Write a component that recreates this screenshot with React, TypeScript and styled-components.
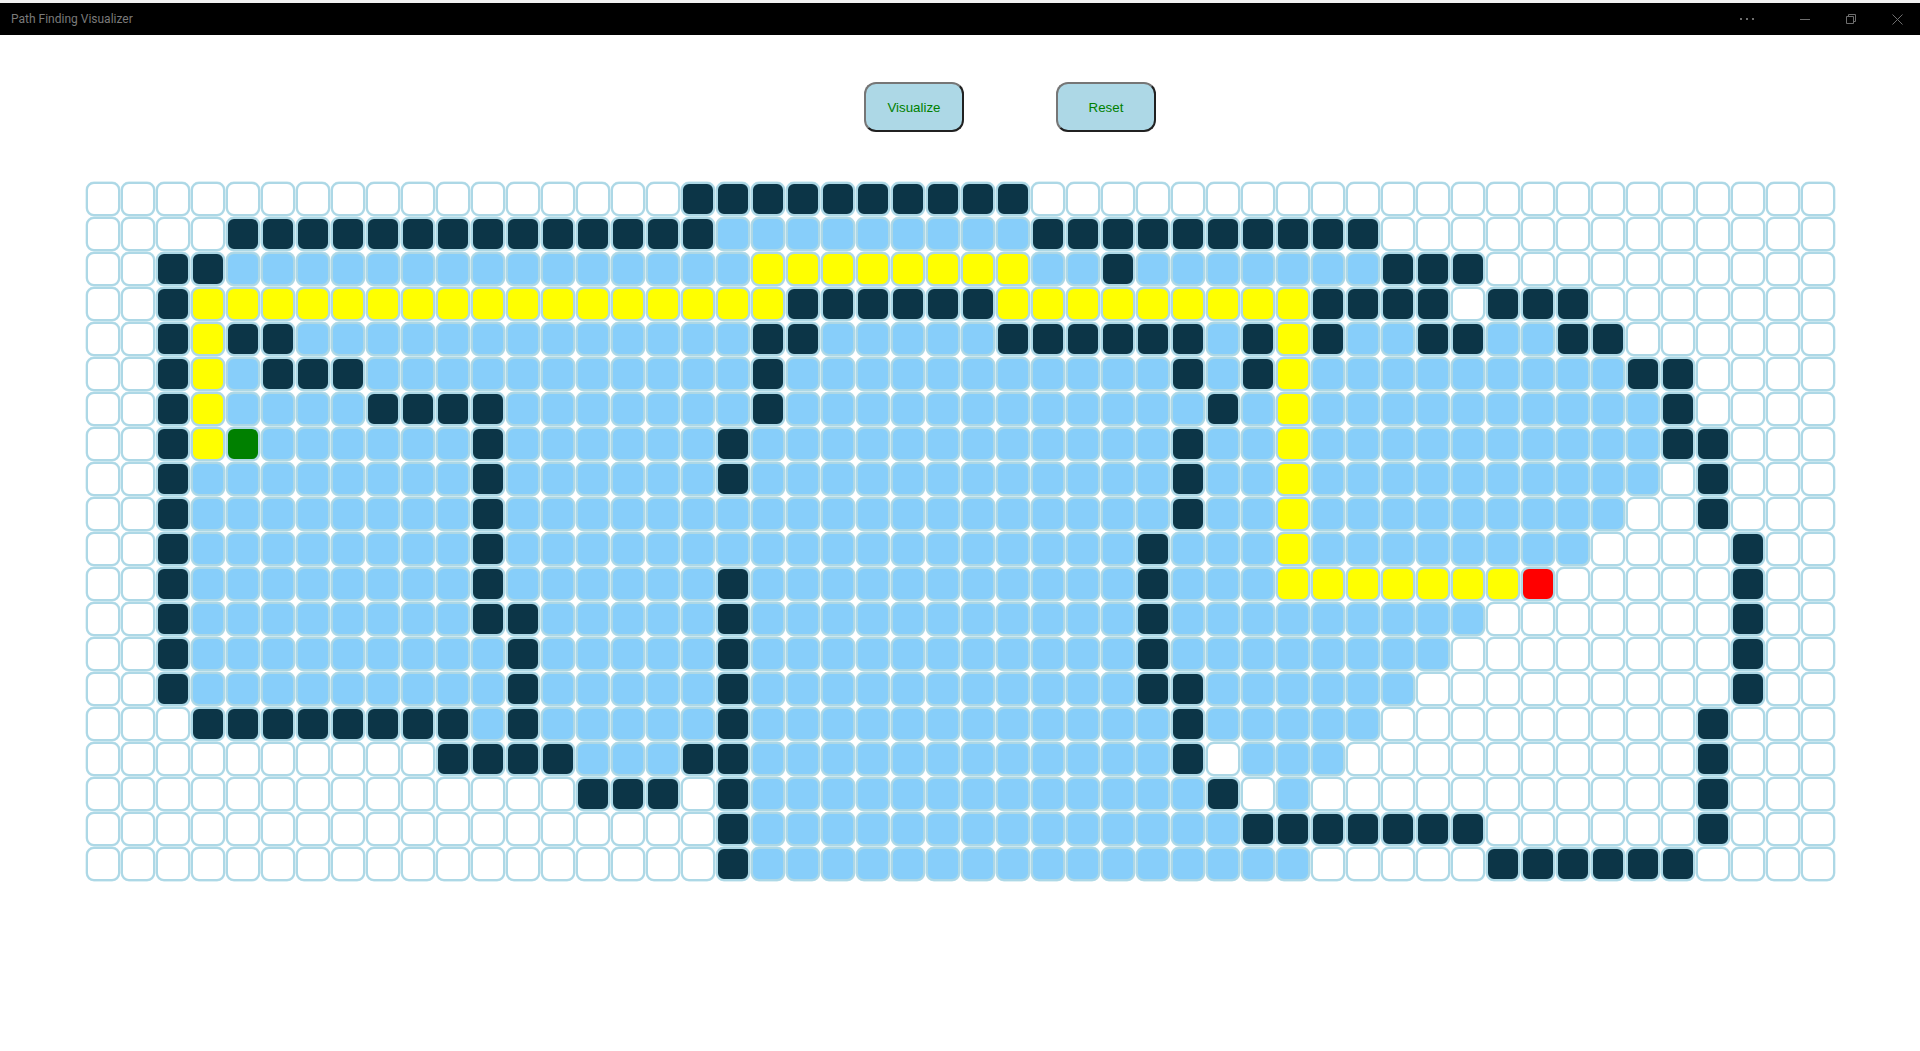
import React from "react";
import styled, { createGlobalStyle } from "styled-components";

const GlobalStyle = createGlobalStyle`
  html, body {
    margin: 0;
    padding: 0;
    background: #fff;
    overflow: hidden;
  }
`;

const Page = styled.div`
  width: 1920px;
  height: 1051px;
  display: flex;
  flex-direction: column;
`;

const TitleBar = styled.header`
  height: 32px;
  margin-top: 3px;
  background: #000;
  display: flex;
  align-items: center;
  padding-left: 11px;
  box-shadow: 0 -3px 0 #f0f0f0;
`;

const Title = styled.span`
  flex: 1;
  font-family: Roboto, "Open Sans", sans-serif;
  font-size: 12px;
  color: #7a7a7a;
`;

const WindowButtons = styled.div`
  display: flex;
  align-items: center;
`;

const WindowButton = styled.div`
  width: 46px;
  height: 32px;
  display: flex;
  align-items: center;
  justify-content: center;
`;

const MoreButton = styled(WindowButton)`
  margin-right: 12px;
`;

const Toolbar = styled.div`
  display: flex;
  gap: 92px;
  padding: 47px 0 50px 864px;
`;

const ActionButton = styled.button`
  width: 100px;
  height: 50px;
  box-sizing: border-box;
  background: lightblue;
  color: green;
  border: 2px solid;
  border-color: #767676 #212121 #212121 #767676;
  border-radius: 12px;
  font-family: "Liberation Sans", Arial, sans-serif;
  font-size: 13.333px;
  cursor: pointer;
`;

const Grid = styled.div`
  display: grid;
  grid-template-columns: repeat(50, 34px);
  grid-auto-rows: 34px;
  gap: 1px;
  padding-left: 86px;
`;

const cellColors: Record<string, string> = {
  ".": "#fff",
  "#": "#0c3547",
  v: "#87cefa",
  y: "#ffff00",
  S: "#008000",
  E: "#ff0000",
};

const Cell = styled.div<{ $kind: string }>`
  box-sizing: border-box;
  border: 2px solid lightblue;
  border-radius: 8px;
  background: ${(p) => cellColors[p.$kind]};
  box-shadow: 0 0 0 0.4px rgba(173, 216, 230, 0.8);
`;

// run lengths per row: . empty, # wall, v visited, y path, S start, E end
const rows = [
  "17. 10# 23.",
  "4. 14# 9v 10# 13.",
  "2. 2# 15v 8y 2v 1# 7v 3# 10.",
  "2. 1# 17y 6# 9y 4# 1. 3# 7.",
  "2. 1# 1y 2# 13v 2# 5v 6# 1v 1# 1y 1# 2v 2# 2v 2# 6.",
  "2. 1# 1y 1v 3# 11v 1# 11v 1# 1v 1# 1y 9v 2# 4.",
  "2. 1# 1y 4v 4# 7v 1# 12v 1# 1v 1y 10v 1# 4.",
  "2. 1# 1y 1S 6v 1# 6v 1# 12v 1# 2v 1y 10v 2# 3.",
  "2. 1# 8v 1# 6v 1# 12v 1# 2v 1y 10v 1. 1# 3.",
  "2. 1# 8v 1# 19v 1# 2v 1y 9v 2. 1# 3.",
  "2. 1# 8v 1# 18v 1# 3v 1y 8v 4. 1# 2.",
  "2. 1# 8v 1# 6v 1# 11v 1# 3v 7y 1E 5. 1# 2.",
  "2. 1# 8v 2# 5v 1# 11v 1# 9v 7. 1# 2.",
  "2. 1# 9v 1# 5v 1# 11v 1# 8v 8. 1# 2.",
  "2. 1# 9v 1# 5v 1# 11v 2# 6v 9. 1# 2.",
  "3. 8# 1v 1# 5v 1# 12v 1# 5v 9. 1# 3.",
  "10. 4# 3v 2# 12v 1# 1. 3v 10. 1# 3.",
  "14. 3# 1. 1# 13v 1# 1. 1v 11. 1# 3.",
  "18. 1# 14v 7# 6. 1# 3.",
  "18. 1# 16v 5. 6# 4.",
];

const cells = rows.flatMap((row) =>
  row.split(" ").flatMap((run) => {
    const count = parseInt(run, 10);
    return Array<string>(count).fill(run[run.length - 1]);
  })
);

const iconColor = "#6e6e6e";

const App = () => {
  return (
    <Page>
      <GlobalStyle />
      <TitleBar>
        <Title>Path Finding Visualizer</Title>
        <WindowButtons>
          <MoreButton>
            <svg width="16" height="4" viewBox="0 0 16 4" fill={iconColor}>
              <rect x="1" y="1" width="2" height="2" />
              <rect x="7" y="1" width="2" height="2" />
              <rect x="13" y="1" width="2" height="2" />
            </svg>
          </MoreButton>
          <WindowButton>
            <svg width="10" height="10" viewBox="0 0 10 10" stroke={iconColor} fill="none">
              <path d="M0 5.5h10" />
            </svg>
          </WindowButton>
          <WindowButton>
            <svg width="10" height="10" viewBox="0 0 10 10" stroke={iconColor} fill="none">
              <path d="M0.5 2.5h7v7h-7z" />
              <path d="M2.5 2.5v-2h7v7h-2" />
            </svg>
          </WindowButton>
          <WindowButton>
            <svg width="11" height="11" viewBox="0 0 11 11" stroke={iconColor} fill="none">
              <path d="M0.5 0.5l10 10M10.5 0.5l-10 10" />
            </svg>
          </WindowButton>
        </WindowButtons>
      </TitleBar>
      <Toolbar>
        <ActionButton>Visualize</ActionButton>
        <ActionButton>Reset</ActionButton>
      </Toolbar>
      <Grid>
        {cells.map((kind, i) => (
          <Cell key={i} $kind={kind} />
        ))}
      </Grid>
    </Page>
  );
};

export default App;
